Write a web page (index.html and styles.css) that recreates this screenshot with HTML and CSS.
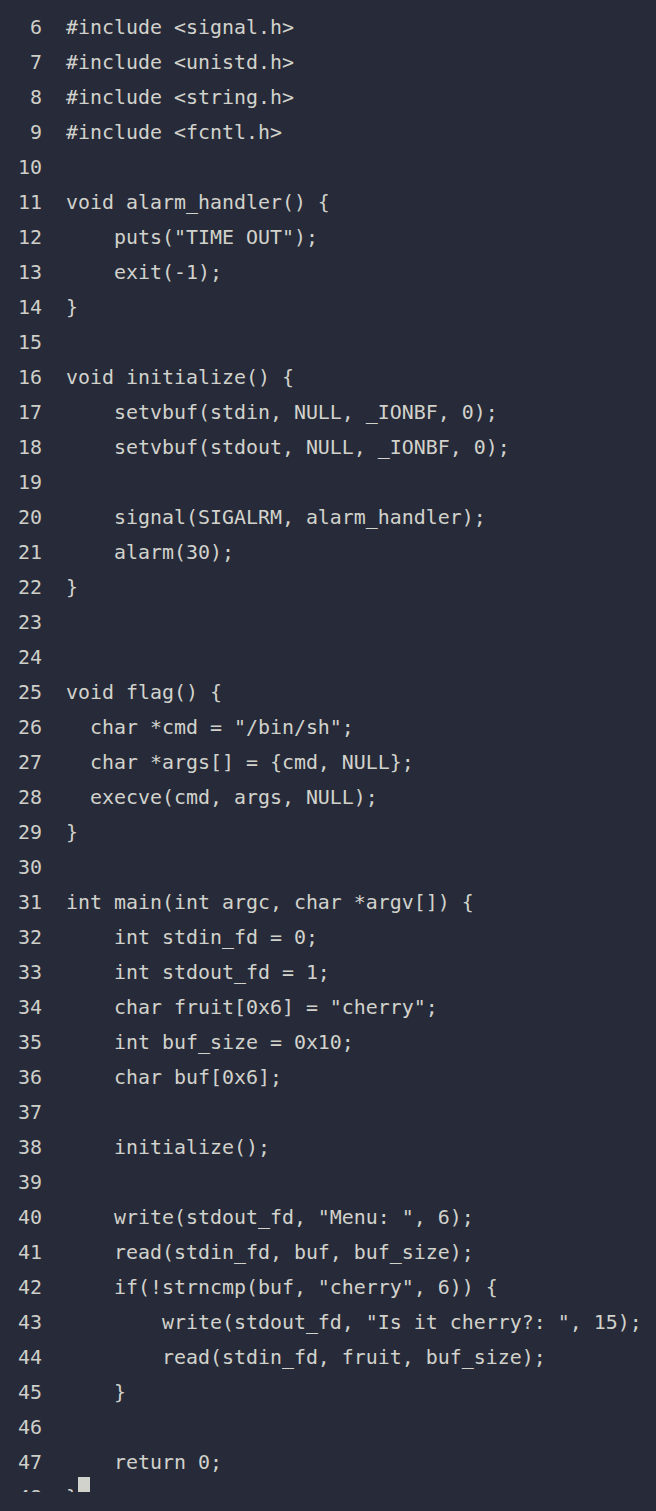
FILE: index.html
```html
<!DOCTYPE html>
<html>
<head>
<meta charset="utf-8">
<link rel="stylesheet" href="styles.css">
</head>
<body>
<div class="editor">
<div class="line"><span class="num">6</span><span class="code">#include &lt;signal.h&gt;</span></div>
<div class="line"><span class="num">7</span><span class="code">#include &lt;unistd.h&gt;</span></div>
<div class="line"><span class="num">8</span><span class="code">#include &lt;string.h&gt;</span></div>
<div class="line"><span class="num">9</span><span class="code">#include &lt;fcntl.h&gt;</span></div>
<div class="line"><span class="num">10</span><span class="code"></span></div>
<div class="line"><span class="num">11</span><span class="code">void alarm_handler() {</span></div>
<div class="line"><span class="num">12</span><span class="code">    puts("TIME OUT");</span></div>
<div class="line"><span class="num">13</span><span class="code">    exit(-1);</span></div>
<div class="line"><span class="num">14</span><span class="code">}</span></div>
<div class="line"><span class="num">15</span><span class="code"></span></div>
<div class="line"><span class="num">16</span><span class="code">void initialize() {</span></div>
<div class="line"><span class="num">17</span><span class="code">    setvbuf(stdin, NULL, _IONBF, 0);</span></div>
<div class="line"><span class="num">18</span><span class="code">    setvbuf(stdout, NULL, _IONBF, 0);</span></div>
<div class="line"><span class="num">19</span><span class="code"></span></div>
<div class="line"><span class="num">20</span><span class="code">    signal(SIGALRM, alarm_handler);</span></div>
<div class="line"><span class="num">21</span><span class="code">    alarm(30);</span></div>
<div class="line"><span class="num">22</span><span class="code">}</span></div>
<div class="line"><span class="num">23</span><span class="code"></span></div>
<div class="line"><span class="num">24</span><span class="code"></span></div>
<div class="line"><span class="num">25</span><span class="code">void flag() {</span></div>
<div class="line"><span class="num">26</span><span class="code">  char *cmd = "/bin/sh";</span></div>
<div class="line"><span class="num">27</span><span class="code">  char *args[] = {cmd, NULL};</span></div>
<div class="line"><span class="num">28</span><span class="code">  execve(cmd, args, NULL);</span></div>
<div class="line"><span class="num">29</span><span class="code">}</span></div>
<div class="line"><span class="num">30</span><span class="code"></span></div>
<div class="line"><span class="num">31</span><span class="code">int main(int argc, char *argv[]) {</span></div>
<div class="line"><span class="num">32</span><span class="code">    int stdin_fd = 0;</span></div>
<div class="line"><span class="num">33</span><span class="code">    int stdout_fd = 1;</span></div>
<div class="line"><span class="num">34</span><span class="code">    char fruit[0x6] = "cherry";</span></div>
<div class="line"><span class="num">35</span><span class="code">    int buf_size = 0x10;</span></div>
<div class="line"><span class="num">36</span><span class="code">    char buf[0x6];</span></div>
<div class="line"><span class="num">37</span><span class="code"></span></div>
<div class="line"><span class="num">38</span><span class="code">    initialize();</span></div>
<div class="line"><span class="num">39</span><span class="code"></span></div>
<div class="line"><span class="num">40</span><span class="code">    write(stdout_fd, "Menu: ", 6);</span></div>
<div class="line"><span class="num">41</span><span class="code">    read(stdin_fd, buf, buf_size);</span></div>
<div class="line"><span class="num">42</span><span class="code">    if(!strncmp(buf, "cherry", 6)) {</span></div>
<div class="line"><span class="num">43</span><span class="code">        write(stdout_fd, "Is it cherry?: ", 15);</span></div>
<div class="line"><span class="num">44</span><span class="code">        read(stdin_fd, fruit, buf_size);</span></div>
<div class="line"><span class="num">45</span><span class="code">    }</span></div>
<div class="line"><span class="num">46</span><span class="code"></span></div>
<div class="line"><span class="num">47</span><span class="code">    return 0;</span></div>
<div class="line"><span class="num">48</span><span class="code">}<span class="cursor"></span></span></div>
</div>
</body>
</html>
```
FILE: styles.css
```css
html, body {
  margin: 0;
  padding: 0;
  background: #272b39;
}
.editor {
  height: 1492px;
  overflow: hidden;
  padding: 10px 0 0 18px;
  box-sizing: border-box;
  font-family: "DejaVu Sans Mono", "Liberation Mono", monospace;
  font-size: 19.93px;
  line-height: 35px;
  color: #d2d2cc;
}
.line {
  display: flex;
  gap: 24px;
  height: 35px;
}
.num {
  width: 24px;
  text-align: right;
  flex: none;
  color: #cfcfc9;
}
.code {
  white-space: pre;
  position: relative;
}
.cursor {
  position: absolute;
  left: 12px;
  top: -3px;
  width: 12px;
  height: 16px;
  background: #d2d2cc;
}
```
